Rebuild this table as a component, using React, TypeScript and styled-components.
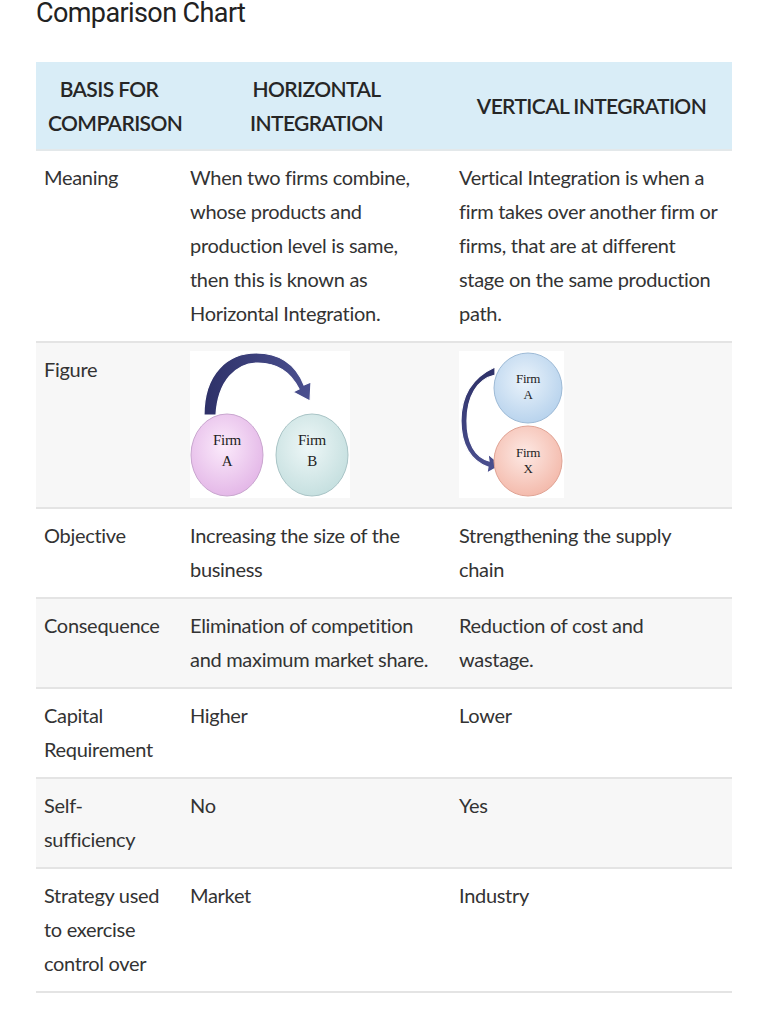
import React from "react";
import styled, { createGlobalStyle } from "styled-components";

const Global = createGlobalStyle`
  html, body { margin: 0; padding: 0; background: #fff; }
  body { font-family: Lato, "Open Sans", sans-serif; color: #333; }
`;

const Page = styled.div`
  padding: 0 36px;
  width: 696px;
`;

const Title = styled.h2`
  margin: 0;
  font-family: Roboto, "Liberation Sans", sans-serif;
  font-weight: 400;
  font-size: 27px;
  line-height: 26px;
  letter-spacing: -0.6px;
  color: #222;
  box-sizing: border-box;
  height: 62px;
`;

const Table = styled.table`
  width: 696px;
  border-collapse: collapse;
  table-layout: fixed;
  font-size: 20px;
  line-height: 34px;
  letter-spacing: -0.3px;
`;

const HeadRow = styled.tr`
  background: #d9edf7;
  border-bottom: 2px solid #e3e8ea;
`;

const Th = styled.th<{ $w: number }>`
  width: ${(p) => p.$w}px;
  height: 88px;
  box-sizing: border-box;
  padding: 8px 12px;
  font-weight: 600;
  font-size: 21px;
  line-height: 34px;
  text-align: center;
  vertical-align: middle;
  color: #262626;
  letter-spacing: -0.6px;
`;

const Row = styled.tr<{ $shade: boolean }>`
  background: ${(p) => (p.$shade ? "#f7f7f7" : "#ffffff")};
  border-bottom: 2px solid #e4e4e4;
`;

const Td = styled.td<{ $pr?: number }>`
  vertical-align: top;
  padding: 9px ${(p) => p.$pr ?? 14}px 11px 8px;
  color: #333;
`;

const FigCell = styled.td`
  vertical-align: top;
  padding: 8px 8px 9px 8px;
`;

const FigBox = styled.div<{ $w: number }>`
  width: ${(p) => p.$w}px;
  height: 147px;
  background: #fff;
  svg { display: block; }
`;

const serif = "'Liberation Serif', 'DejaVu Serif', serif";

const HorizontalFigure = () => (
  <FigBox $w={160}>
    <svg width="160" height="147" viewBox="0 0 160 147">
      <defs>
        <radialGradient id="pinkG" cx="45%" cy="40%" r="65%">
          <stop offset="0%" stopColor="#fbeafb" />
          <stop offset="100%" stopColor="#e2b4e6" />
        </radialGradient>
        <radialGradient id="cyanG" cx="45%" cy="40%" r="65%">
          <stop offset="0%" stopColor="#eef7f7" />
          <stop offset="100%" stopColor="#c3dede" />
        </radialGradient>
        <linearGradient id="arrG" x1="0" y1="0" x2="1" y2="0">
          <stop offset="0%" stopColor="#2e3168" />
          <stop offset="100%" stopColor="#4b5090" />
        </linearGradient>
      </defs>
      <path
        d="M14 64 C14 22 38 2 66 2 C90 2 106 14 114 34 L121 31 L120 50 L103 41 L109 38 C101 22 88 12 68 12 C46 12 28 30 26 64 Z"
        fill="url(#arrG)"
        stroke="#fff"
        strokeWidth="1.2"
      />
      <ellipse cx="37" cy="104" rx="36" ry="41" fill="url(#pinkG)" stroke="#c9a6cf" strokeWidth="1" />
      <ellipse cx="122" cy="104" rx="36" ry="41" fill="url(#cyanG)" stroke="#a9c4c6" strokeWidth="1" />
      <text x="37" y="94" textAnchor="middle" fontFamily={serif} fontSize="15" fill="#222">Firm</text>
      <text x="37" y="115" textAnchor="middle" fontFamily={serif} fontSize="15" fill="#222">A</text>
      <text x="122" y="94" textAnchor="middle" fontFamily={serif} fontSize="15" fill="#222">Firm</text>
      <text x="122" y="115" textAnchor="middle" fontFamily={serif} fontSize="15" fill="#222">B</text>
    </svg>
  </FigBox>
);

const VerticalFigure = () => (
  <FigBox $w={105}>
    <svg width="105" height="147" viewBox="0 0 105 147">
      <defs>
        <radialGradient id="blueG" cx="45%" cy="40%" r="65%">
          <stop offset="0%" stopColor="#eaf3fb" />
          <stop offset="100%" stopColor="#b5d1ec" />
        </radialGradient>
        <radialGradient id="salmonG" cx="45%" cy="40%" r="65%">
          <stop offset="0%" stopColor="#fde9e4" />
          <stop offset="100%" stopColor="#f3b7a8" />
        </radialGradient>
        <linearGradient id="arrV" x1="0" y1="0" x2="0" y2="1">
          <stop offset="0%" stopColor="#2e3168" />
          <stop offset="100%" stopColor="#4b5090" />
        </linearGradient>
      </defs>
      <path
        d="M36 24 C18 28 8 46 8 70 C8 92 16 106 30 110 L29 103 L42 114 L28 122 L29 116 C12 110 2 94 2 70 C2 44 14 26 36 16 Z"
        fill="url(#arrV)"
        stroke="#fff"
        strokeWidth="1.2"
      />
      <ellipse cx="69" cy="37" rx="34" ry="35" fill="url(#blueG)" stroke="#9dbad6" strokeWidth="1" />
      <ellipse cx="69" cy="110" rx="34" ry="35" fill="url(#salmonG)" stroke="#e0a394" strokeWidth="1" />
      <text x="69" y="32" textAnchor="middle" fontFamily={serif} fontSize="13" fill="#222">Firm</text>
      <text x="69" y="48" textAnchor="middle" fontFamily={serif} fontSize="13" fill="#222">A</text>
      <text x="69" y="106" textAnchor="middle" fontFamily={serif} fontSize="13" fill="#222">Firm</text>
      <text x="69" y="122" textAnchor="middle" fontFamily={serif} fontSize="13" fill="#222">X</text>
    </svg>
  </FigBox>
);

type RowData = { basis: string; h: string; v: string };

const rows: RowData[] = [
  {
    basis: "Objective",
    h: "Increasing the size of the business",
    v: "Strengthening the supply chain",
  },
  {
    basis: "Consequence",
    h: "Elimination of competition and maximum market share.",
    v: "Reduction of cost and wastage.",
  },
  { basis: "Capital Requirement", h: "Higher", v: "Lower" },
  { basis: "Self-sufficiency", h: "No", v: "Yes" },
  { basis: "Strategy used to exercise control over", h: "Market", v: "Industry" },
];

export default function App() {
  return (
    <>
      <Global />
      <Page>
        <Title>Comparison Chart</Title>
        <Table>
          <thead>
            <HeadRow>
              <Th $w={146}>BASIS FOR COMPARISON</Th>
              <Th $w={269}>HORIZONTAL INTEGRATION</Th>
              <Th $w={281}>VERTICAL INTEGRATION</Th>
            </HeadRow>
          </thead>
          <tbody>
            <Row $shade={false}>
              <Td $pr={18}>Meaning</Td>
              <Td>
                When two firms combine, whose products and production level is same, then this is known as
                Horizontal Integration.
              </Td>
              <Td>
                Vertical Integration is when a firm takes over another firm or firms, that are at different stage
                on the same production path.
              </Td>
            </Row>
            <Row $shade={true}>
              <Td $pr={18}>Figure</Td>
              <FigCell>
                <HorizontalFigure />
              </FigCell>
              <FigCell>
                <VerticalFigure />
              </FigCell>
            </Row>
            {rows.map((r, i) => (
              <Row key={i} $shade={i % 2 === 1}>
                <Td $pr={18}>{r.basis}</Td>
                <Td>{r.h}</Td>
                <Td>{r.v}</Td>
              </Row>
            ))}
          </tbody>
        </Table>
      </Page>
    </>
  );
}
